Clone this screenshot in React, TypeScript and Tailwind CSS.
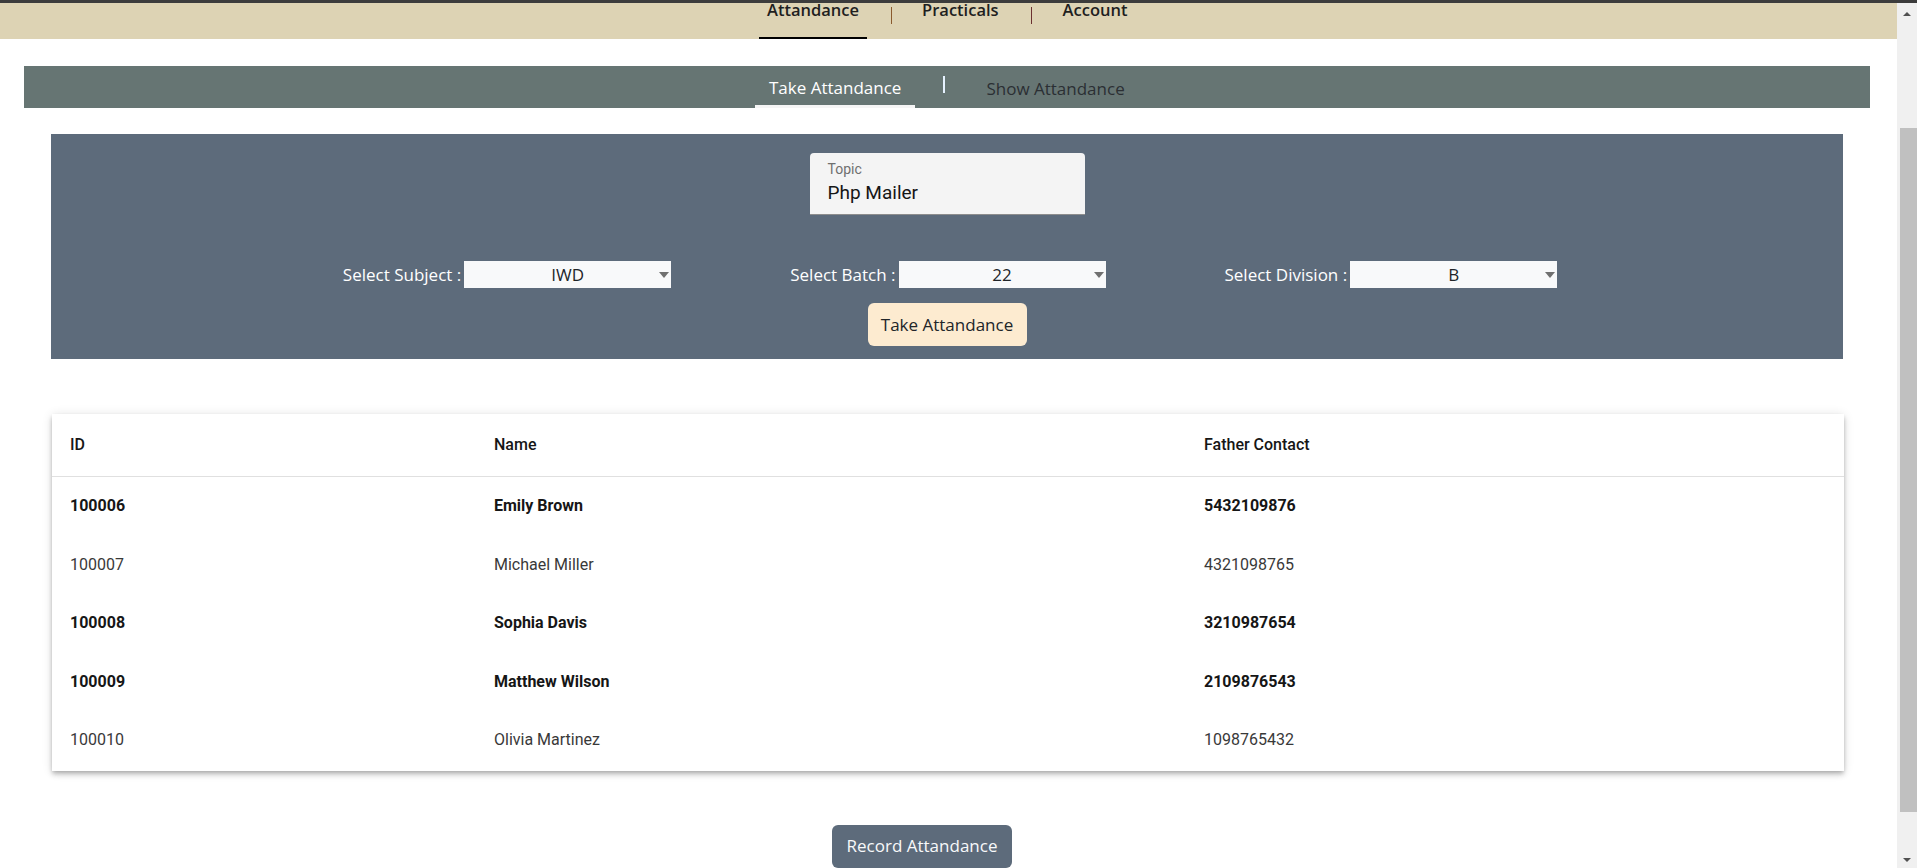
import React from 'react';

type Student = { id: string; name: string; contact: string; bold: boolean };

const students: Student[] = [
  { id: '100006', name: 'Emily Brown', contact: '5432109876', bold: true },
  { id: '100007', name: 'Michael Miller', contact: '4321098765', bold: false },
  { id: '100008', name: 'Sophia Davis', contact: '3210987654', bold: true },
  { id: '100009', name: 'Matthew Wilson', contact: '2109876543', bold: true },
  { id: '100010', name: 'Olivia Martinez', contact: '1098765432', bold: false },
];

const SelectBox: React.FC<{ label: string; value: string }> = ({ label, value }) => (
  <div className="flex items-center">
    <span className="text-[17px] text-white mr-[3px] leading-none">{label}</span>
    <div className="relative w-[207px] h-[27px] bg-[#f8f9fa] flex items-center justify-center">
      <span className="text-[17px] text-[#212529] leading-none">{value}</span>
      <span className="absolute right-[2px] top-[11px] w-0 h-0 border-l-[5px] border-r-[5px] border-t-[6px] border-l-transparent border-r-transparent border-t-[#707070]"></span>
    </div>
  </div>
);

const App: React.FC = () => {
  return (
    <div className="h-[868px] w-full overflow-hidden bg-white flex flex-col font-['Open_Sans',sans-serif]">
      <div className="h-[3px] bg-[#3c3c3c] shrink-0"></div>

      <div className="flex flex-1 min-h-0">
        <div className="flex-1 flex flex-col">
          {/* top nav */}
          <nav className="h-[36px] bg-[#ddd3b4] flex items-start pl-[759px] shrink-0">
            <div className="h-full flex flex-col justify-between">
              <span className="px-[8px] -mt-[3px] text-[16.5px] leading-[20px] font-semibold text-[#1f1f1f]">Attandance</span>
              <span className="h-[2px] bg-black"></span>
            </div>
            <span className="ml-[24px] mt-[4px] w-px h-[17px] bg-[#8a5a2e]"></span>
            <span className="ml-[30px] -mt-[3px] text-[16.5px] leading-[20px] font-semibold text-[#1f1f1f]">Practicals</span>
            <span className="ml-[32px] mt-[4px] w-px h-[17px] bg-[#6b3030]"></span>
            <span className="ml-[31px] -mt-[3px] text-[16.5px] leading-[20px] font-semibold text-[#1f1f1f]">Account</span>
          </nav>

          {/* sub tabs */}
          <div className="mt-[27px] ml-[24px] mr-[27px] h-[42px] bg-[#667573] flex items-stretch pl-[731px]">
            <div className="flex flex-col justify-between">
              <span className="px-[14px] pt-[10px] text-[17px] leading-[24px] text-white">Take Attandance</span>
              <span className="h-[3px] bg-[#f5f5f5]"></span>
            </div>
            <span className="ml-[28px] mt-[10px] w-[2px] h-[17px] bg-[#e6f2ff]"></span>
            <span className="ml-[41px] pt-[11px] text-[17px] leading-[24px] text-[#2b2f33]">Show Attandance</span>
          </div>

          {/* form panel */}
          <div className="mt-[26px] ml-[51px] mr-[54px] bg-[#5d6b7b] pt-[19px] pb-[13px] flex flex-col items-center">
            <div className="w-[275px] h-[62px] bg-[#f4f4f4] rounded-t-[4px] border-b border-[#8d8d8d] px-[18px] pt-[7px] font-['Roboto',sans-serif]">
              <div className="text-[14px] leading-[18px] text-[#6f6f6f]">Topic</div>
              <div className="mt-[3px] text-[19px] leading-[24px] text-[#161616]">Php Mailer</div>
            </div>
            <div className="mt-[46px] pl-[6px] flex items-center gap-[119px]">
              <SelectBox label="Select Subject :" value="IWD" />
              <SelectBox label="Select Batch :" value="22" />
              <SelectBox label="Select Division :" value="B" />
            </div>
            <button className="mt-[15px] w-[159px] h-[43px] rounded-[6px] bg-[#fdebd0] text-[17px] text-[#212529]">
              Take Attandance
            </button>
          </div>

          {/* table */}
          <div className="mt-[55px] ml-[52px] mr-[53px] bg-white pb-[1px] shadow-[0_2px_4px_-1px_rgba(0,0,0,0.2),0_4px_5px_0_rgba(0,0,0,0.14),0_1px_10px_0_rgba(0,0,0,0.12)] font-['Roboto',sans-serif] text-[16px]">
            <div className="grid grid-cols-[424px_710px_1fr] h-[63px] items-center border-b border-[#e0e0e0] font-medium text-[#161616]">
              <div className="px-[18px]">ID</div>
              <div className="px-[18px]">Name</div>
              <div className="px-[18px]">Father Contact</div>
            </div>
            {students.map((s) => (
              <div
                key={s.id}
                className={`grid grid-cols-[424px_710px_1fr] h-[58.5px] items-center ${s.bold ? 'font-bold text-[#161616]' : 'text-[#393939]'}`}
              >
                <div className="px-[18px]">{s.id}</div>
                <div className="px-[18px]">{s.name}</div>
                <div className="px-[18px]">{s.contact}</div>
              </div>
            ))}
          </div>

          <div className="mt-[54px] flex justify-center pr-[53px]">
            <button className="w-[180px] h-[43px] shrink-0 rounded-[6px] bg-[#5d6b7b] text-[17px] text-[#f8f9fa]">
              Record Attandance
            </button>
          </div>
        </div>

        {/* scrollbar */}
        <div className="w-[20px] shrink-0 bg-[#f0f0f0] flex flex-col items-center">
          <span className="mt-[9px] w-0 h-0 border-l-[4px] border-r-[4px] border-b-[4px] border-l-transparent border-r-transparent border-b-[#505050]"></span>
          <div className="mt-[112px] ml-[2px] w-[17px] h-[684px] bg-[#c0c0c0]"></div>
          <span className="mt-auto mb-[6px] w-0 h-0 border-l-[4px] border-r-[4px] border-t-[4px] border-l-transparent border-r-transparent border-t-[#505050]"></span>
        </div>
      </div>
    </div>
  );
};

export default App;
